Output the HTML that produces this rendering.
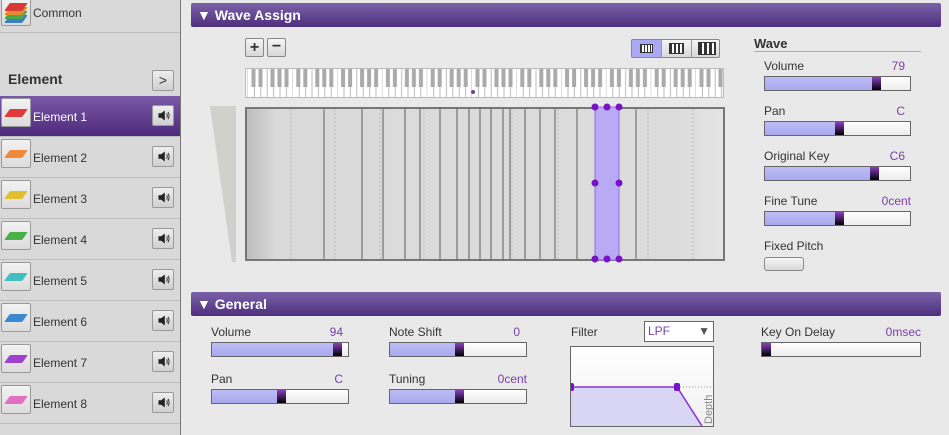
<!DOCTYPE html>
<html><head><style>
*{margin:0;padding:0;box-sizing:border-box}
body{width:949px;height:435px;overflow:hidden;background:#e9e9e9;font-family:"Liberation Sans",sans-serif;font-size:12px;color:#333;position:relative}
.a{position:absolute}
svg{overflow:visible}
#side{left:0;top:0;width:181px;height:435px;background:#d9d9d9;border-right:1px solid #777}
.row{position:absolute;left:0;width:180px;height:41px;border-bottom:1px solid #bdbdbd}
.ic{position:absolute;left:1px;top:2px;width:30px;height:29px;border:1px solid #999;border-radius:2px;background:linear-gradient(#f2f2f2,#dcdcdc)}
.ic i{position:absolute;left:5px;top:10px;width:18px;height:8px;transform:skewX(-35deg);border-radius:1px}
.rl{position:absolute;left:33px;top:14px;font-size:12px;color:#333}
.sp{position:absolute;left:152px;top:9px;width:22px;height:21px;border:1px solid #999;border-radius:2px;background:linear-gradient(#eee,#d0d0d0)}
.hdr{position:absolute;left:191px;width:750px;height:24px;background:linear-gradient(#7a62a8,#4d2f7c);border-radius:2px;color:#fff;font-weight:bold;font-size:14px;line-height:24px;padding-left:6px}
.lab{position:absolute;font-size:12px;color:#333}
.val{position:absolute;font-size:12px;color:#7a3fa8;text-align:right}
.sl{position:absolute;height:15px;border:1px solid #666;background:linear-gradient(#fff,#ececec)}
.sl b{position:absolute;left:0;top:0;height:13px;background:linear-gradient(#bdbdf5,#a8a8ee)}
.sl s{position:absolute;top:0;width:9px;height:13px;background:linear-gradient(#8a3fc0,#000)}
.btn{position:absolute;border:1px solid #888;border-radius:2px;background:linear-gradient(#f5f5f5,#d8d8d8)}
</style></head><body>
<svg width="0" height="0" style="position:absolute"><defs><symbol id="spk" viewBox="0 0 22 21"><path d="M6 8H9L13 5V16L9 13H6Z" fill="#222"/><path d="M15 8Q16.5 10.5 15 13M16.5 6.5Q19 10.5 16.5 14.5" stroke="#222" fill="none" stroke-width="1"/></symbol></defs></svg>
<div id="side" class="a">
 <div class="row" style="top:-8px;height:41px"><div class="ic" style="top:5px"><i style="background:#3a7fc0;top:17px"></i><i style="background:#4aa84a;top:13px"></i><i style="background:#e88a2a;top:9px"></i><i style="background:#d83a3a;top:5px"></i></div><div class="rl" style="top:14px">Common</div></div>
 <div class="a" style="left:8px;top:71px;font-weight:bold;font-size:14px;color:#333">Element</div>
 <div class="sp" style="top:70px;font-size:14px;line-height:18px;text-align:center">&gt;</div>
 <div class="row" style="top:96px;background:linear-gradient(#7a5aa8,#4e2a7a)"><div class="ic"><i style="background:#e03a3a"></i></div><div class="rl" style="color:#fff">Element 1</div><div class="sp"><svg width="20" height="19"><use href="#spk"/></svg></div></div>
 <div class="row" style="top:137px"><div class="ic"><i style="background:#f08a3a"></i></div><div class="rl">Element 2</div><div class="sp"><svg width="20" height="19"><use href="#spk"/></svg></div></div>
 <div class="row" style="top:178px"><div class="ic"><i style="background:#e0c030"></i></div><div class="rl">Element 3</div><div class="sp"><svg width="20" height="19"><use href="#spk"/></svg></div></div>
 <div class="row" style="top:219px"><div class="ic"><i style="background:#4ab04a"></i></div><div class="rl">Element 4</div><div class="sp"><svg width="20" height="19"><use href="#spk"/></svg></div></div>
 <div class="row" style="top:260px"><div class="ic"><i style="background:#40c0c0"></i></div><div class="rl">Element 5</div><div class="sp"><svg width="20" height="19"><use href="#spk"/></svg></div></div>
 <div class="row" style="top:301px"><div class="ic"><i style="background:#3a88d0"></i></div><div class="rl">Element 6</div><div class="sp"><svg width="20" height="19"><use href="#spk"/></svg></div></div>
 <div class="row" style="top:342px"><div class="ic"><i style="background:#a040d0"></i></div><div class="rl">Element 7</div><div class="sp"><svg width="20" height="19"><use href="#spk"/></svg></div></div>
 <div class="row" style="top:383px"><div class="ic"><i style="background:#e070c0"></i></div><div class="rl">Element 8</div><div class="sp"><svg width="20" height="19"><use href="#spk"/></svg></div></div>
</div>

<div class="hdr" style="top:3px">▼ Wave Assign</div>
<div class="btn" style="left:245px;top:38px;width:19px;height:19px;text-align:center;font-weight:bold;font-size:16px;line-height:17px">+</div>
<div class="btn" style="left:267px;top:38px;width:19px;height:19px;text-align:center;font-weight:bold;font-size:16px;line-height:16px">−</div>
<div class="btn" style="left:631px;top:39px;width:89px;height:19px;overflow:hidden"><div class="a" style="left:0;top:0;width:29px;height:17px;background:#a8a8f5"></div><div class="a" style="left:29px;top:0;width:1px;height:17px;background:#999"></div><div class="a" style="left:59px;top:0;width:1px;height:17px;background:#999"></div>
<span class="a" style="left:8px;top:4px;width:13px;height:9px;border:1px solid #333;background:repeating-linear-gradient(90deg,#333 0 1px,#fff 1px 3px)"></span>
<span class="a" style="left:37px;top:3px;width:15px;height:11px;border:1px solid #333;background:repeating-linear-gradient(90deg,#333 0 2px,#fff 2px 4px)"></span>
<span class="a" style="left:66px;top:2px;width:18px;height:13px;border:1px solid #333;background:repeating-linear-gradient(90deg,#333 0 3px,#fff 3px 5px)"></span></div>

<div class="a" style="left:245px;top:68px;width:479px;height:30px;border:1px solid #bbb;background:#fff">
<svg width="477" height="28" style="position:absolute;left:0;top:0">
<defs><pattern id="k" width="44.8" height="28" patternUnits="userSpaceOnUse" x="2">
<path d="M6.4 0V28M12.8 0V28M19.2 0V28M25.6 0V28M32 0V28M38.4 0V28M44.8 0V28" stroke="#bbb" stroke-width="1"/>
<rect x="3.5" y="0" width="4" height="18" fill="#aaa"/><rect x="10.5" y="0" width="4" height="18" fill="#aaa"/>
<rect x="22.5" y="0" width="4" height="18" fill="#aaa"/><rect x="29.5" y="0" width="4" height="18" fill="#aaa"/><rect x="36.5" y="0" width="4" height="18" fill="#aaa"/>
</pattern></defs>
<rect width="477" height="28" fill="url(#k)"/><circle cx="227" cy="23" r="2" fill="#7040a0"/></svg></div>

<svg class="a" style="left:210px;top:106px" width="28" height="157"><polygon points="0,0 26,0 26,156 22,156" fill="#d0d0cc"/></svg>

<div class="a" style="left:245px;top:107px;width:480px;height:154px;border:2px solid #777;background:linear-gradient(90deg,#bdbdbd,#dadada 30px,#dcdcdc 90%,#e4e4e4)"></div>
<svg class="a" width="476" height="150" style="left:247px;top:109px">
<g stroke="#bbb" stroke-dasharray="2,2"><path d="M44 0V150M88 0V150M133 0V150M177 0V150M265 0V150M311 0V150M401 0V150M446 0V150"/></g>
<g stroke="#888" stroke-width="1.5"><path d="M77 0V150M115 0V150M136 0V150M158 0V150M173 0V150M193 0V150M210 0V150M222 0V150M233 0V150M244 0V150M256 0V150M263 0V150M278 0V150M293 0V150M308 0V150M330 0V150M389 0V150"/></g>
<rect x="348" y="-2" width="24" height="153" fill="#b8aaf5" stroke="#8a70e0"/>
<g fill="#7a10c8"><circle cx="348" cy="-2" r="3.5"/><circle cx="360" cy="-2" r="3.5"/><circle cx="372" cy="-2" r="3.5"/><circle cx="348" cy="74" r="3.5"/><circle cx="372" cy="74" r="3.5"/><circle cx="348" cy="150" r="3.5"/><circle cx="360" cy="150" r="3.5"/><circle cx="372" cy="150" r="3.5"/></g>
</svg>

<div class="a" style="left:754px;top:36px;font-weight:bold;font-size:13px;color:#333">Wave</div>
<div class="a" style="left:754px;top:51px;width:167px;height:1px;background:#aaa"></div>
<div class="lab" style="left:764px;top:59px">Volume</div><div class="val" style="left:850px;top:59px;width:55px">79</div>
<div class="sl" style="left:764px;top:76px;width:147px"><b style="width:107px"></b><s style="left:107px"></s></div>
<div class="lab" style="left:764px;top:104px">Pan</div><div class="val" style="left:850px;top:104px;width:55px">C</div>
<div class="sl" style="left:764px;top:121px;width:147px"><b style="width:70px"></b><s style="left:70px"></s></div>
<div class="lab" style="left:764px;top:149px">Original Key</div><div class="val" style="left:850px;top:149px;width:55px">C6</div>
<div class="sl" style="left:764px;top:166px;width:147px"><b style="width:105px"></b><s style="left:105px"></s></div>
<div class="lab" style="left:764px;top:194px">Fine Tune</div><div class="val" style="left:850px;top:194px;width:61px">0cent</div>
<div class="sl" style="left:764px;top:211px;width:147px"><b style="width:70px"></b><s style="left:70px"></s></div>
<div class="lab" style="left:764px;top:239px">Fixed Pitch</div>
<div class="btn" style="left:764px;top:257px;width:40px;height:14px;border-radius:3px"></div>

<div class="hdr" style="top:292px">▼ General</div>
<div class="lab" style="left:211px;top:325px">Volume</div><div class="val" style="left:290px;top:325px;width:53px">94</div>
<div class="sl" style="left:211px;top:342px;width:138px"><b style="width:121px"></b><s style="left:121px"></s></div>
<div class="lab" style="left:211px;top:372px">Pan</div><div class="val" style="left:290px;top:372px;width:53px">C</div>
<div class="sl" style="left:211px;top:389px;width:138px"><b style="width:65px"></b><s style="left:65px"></s></div>
<div class="lab" style="left:389px;top:325px">Note Shift</div><div class="val" style="left:470px;top:325px;width:50px">0</div>
<div class="sl" style="left:389px;top:342px;width:138px"><b style="width:65px"></b><s style="left:65px"></s></div>
<div class="lab" style="left:389px;top:372px">Tuning</div><div class="val" style="left:460px;top:372px;width:67px">0cent</div>
<div class="sl" style="left:389px;top:389px;width:138px"><b style="width:65px"></b><s style="left:65px"></s></div>
<div class="lab" style="left:571px;top:325px">Filter</div>
<div class="a" style="left:644px;top:321px;width:70px;height:21px;border:1px solid #666;background:#fff;color:#7a3fa8;font-size:12px;line-height:19px;padding-left:3px">LPF<span style="position:absolute;right:3px;color:#555">▼</span></div>
<div class="a" style="left:570px;top:346px;width:144px;height:81px;border:1px solid #666;background:linear-gradient(#fff,#f0f0f0);overflow:hidden">
<svg width="142" height="79" style="position:absolute;left:0;top:0"><polygon points="0,40 106,40 131,79 0,79" fill="#d8d6f2"/><path d="M106 40H142" stroke="#999" stroke-dasharray="1,2"/><path d="M0 40H106L131 79" stroke="#8a2ee0" stroke-width="1.5" fill="none"/><rect x="-2" y="36" width="5" height="8" rx="2" fill="#7a10c8"/><rect x="103" y="36" width="6" height="8" rx="2" fill="#7a10c8"/>
<text x="0" y="0" transform="translate(141,77) rotate(-90)" font-size="11" fill="#888" font-family="Liberation Sans">Depth</text></svg></div>
<div class="lab" style="left:761px;top:325px">Key On Delay</div><div class="val" style="left:850px;top:325px;width:71px">0msec</div>
<div class="sl" style="left:761px;top:342px;width:160px"><s style="left:0"></s></div>
</body></html>
